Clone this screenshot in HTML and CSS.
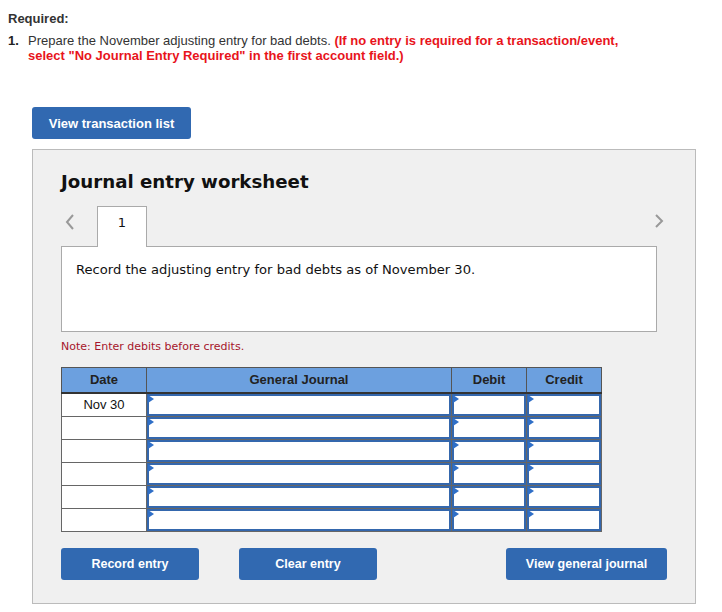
FILE: index.html
```html
<!DOCTYPE html>
<html>
<head>
<meta charset="utf-8">
<link rel="stylesheet" href="styles.css">
</head>
<body>
<div class="required">
  <div class="req-title">Required:</div>
  <div class="req-item">
    <span class="req-num">1.</span>
    <p class="req-text">Prepare the November adjusting entry for bad debts. <b class="red">(If no entry is required for a transaction/event,</b><br><b class="red">select "No Journal Entry Required" in the first account field.)</b></p>
  </div>
</div>

<button class="btn btn-top">View transaction list</button>

<div class="panel">
  <h2 class="title">Journal entry worksheet</h2>
  <div class="nav">
    <svg class="arrow" width="10" height="16" viewBox="0 0 10 16"><path d="M8 1 L2 8 L8 15" fill="none" stroke="#999" stroke-width="2"/></svg>
    <div class="tab">1</div>
    <div class="spacer"></div>
    <svg class="arrow arrow-r" width="10" height="16" viewBox="0 0 10 16"><path d="M2 2 L8 8 L2 14" fill="none" stroke="#999" stroke-width="2"/></svg>
  </div>
  <div class="content">Record the adjusting entry for bad debts as of November 30.</div>
  <div class="note">Note: Enter debits before credits.</div>
  <table class="journal">
    <thead>
      <tr><th class="c-date">Date</th><th class="c-acct">General Journal</th><th class="c-num">Debit</th><th class="c-num">Credit</th></tr>
    </thead>
    <tbody>
      <tr><td class="date">Nov 30</td><td class="in"><div class="field"></div></td><td class="in"><div class="field"></div></td><td class="in"><div class="field"></div></td></tr>
      <tr><td class="date"></td><td class="in"><div class="field"></div></td><td class="in"><div class="field"></div></td><td class="in"><div class="field"></div></td></tr>
      <tr><td class="date"></td><td class="in"><div class="field"></div></td><td class="in"><div class="field"></div></td><td class="in"><div class="field"></div></td></tr>
      <tr><td class="date"></td><td class="in"><div class="field"></div></td><td class="in"><div class="field"></div></td><td class="in"><div class="field"></div></td></tr>
      <tr><td class="date"></td><td class="in"><div class="field"></div></td><td class="in"><div class="field"></div></td><td class="in"><div class="field"></div></td></tr>
      <tr><td class="date"></td><td class="in"><div class="field"></div></td><td class="in"><div class="field"></div></td><td class="in"><div class="field"></div></td></tr>
    </tbody>
  </table>
  <div class="actions">
    <button class="btn btn-act">Record entry</button>
    <button class="btn btn-act btn-clear">Clear entry</button>
    <div class="spacer"></div>
    <button class="btn btn-act btn-view">View general journal</button>
  </div>
</div>
</body>
</html>
```

FILE: styles.css
```css
* { box-sizing: border-box; }
body {
  margin: 0;
  width: 722px;
  height: 612px;
  background: #fff;
  font-family: "Liberation Sans", Arial, sans-serif;
  color: #222;
  overflow: hidden;
}
.required {
  padding: 11px 0 0 8px;
  font-size: 13px;
  line-height: 15px;
}
.req-title { font-weight: bold; color: #333; margin-bottom: 7px; }
.req-item { display: flex; }
.req-num { font-weight: bold; width: 20px; flex: none; }
.req-text { margin: 0; color: #333; width: 640px; }
.red { color: #e8141b; }

.btn {
  display: block;
  border: none;
  background: #3169b1;
  color: #fff;
  font-family: "Liberation Sans", Arial, sans-serif;
  font-weight: bold;
  border-radius: 3px;
  padding: 0;
  text-align: center;
}
.btn-top {
  margin: 44px 0 0 32px;
  width: 159px;
  height: 32px;
  font-size: 13px;
}

.panel {
  margin: 10px 0 0 32px;
  width: 664px;
  height: 455px;
  border: 1px solid #bbb;
  background: #f0f0f0;
  padding: 21px 0 0 28px;
}
.title {
  margin: 0;
  font-family: "DejaVu Sans", Verdana, sans-serif;
  font-size: 18.2px;
  line-height: 22px;
  font-weight: bold;
  color: #111;
}
.nav {
  display: flex;
  align-items: flex-start;
  margin-top: 13px;
  width: 603px;
  height: 41px;
}
.arrow { margin: 8px 0 0 4px; flex: none; }
.arrow-r { margin: 7px 0 0 0; }
.spacer { flex: 1; }
.tab {
  margin-left: 22px;
  width: 50px;
  height: 41px;
  background: #fff;
  border: 1px solid #aaa;
  border-bottom: none;
  text-align: center;
  font-family: "DejaVu Sans", Verdana, sans-serif;
  font-size: 13px;
  padding-top: 8px;
  color: #111;
  position: relative;
  z-index: 1;
}
.content {
  margin-top: -1px;
  width: 596px;
  height: 86px;
  background: #fff;
  border: 1px solid #aaa;
  padding: 15px 0 0 14px;
  font-family: "DejaVu Sans", Verdana, sans-serif;
  font-size: 13.1px;
  line-height: 16px;
  color: #111;
}
.note {
  margin-top: 8px;
  font-family: "DejaVu Sans", Verdana, sans-serif;
  font-size: 11px;
  line-height: 14px;
  color: #a6152b;
}
.journal {
  margin-top: 13px;
  border-collapse: collapse;
  width: 540px;
  table-layout: fixed;
  background: #fff;
}
.journal th {
  background: #6ca0df;
  border: 1px solid #555;
  border-bottom: 2px solid #333;
  height: 25px;
  font-size: 13px;
  font-weight: bold;
  color: #222;
  padding: 0;
}
.c-date { width: 85px; }
.c-acct { width: 305px; }
.c-num { width: 75px; }
.journal td {
  border: 1px solid #666;
  height: 23px;
  padding: 0;
}
.journal td.date {
  text-align: center;
  font-size: 13px;
  color: #111;
  vertical-align: middle;
}
.field {
  position: relative;
  height: 22px;
  border: 2px solid #3467ad;
  background: #fff;
}
.field::before {
  content: "";
  position: absolute;
  left: -1px;
  top: -1px;
  width: 0;
  height: 0;
  border-left: 6px solid #2f6fc7;
  border-top: 4px solid transparent;
  border-bottom: 4px solid transparent;
}
.actions {
  display: flex;
  margin-top: 16px;
  width: 606px;
}
.btn-act {
  width: 138px;
  height: 32px;
  font-size: 12.5px;
}
.btn-clear { margin-left: 40px; }
.btn-view { width: 161px; }
```
